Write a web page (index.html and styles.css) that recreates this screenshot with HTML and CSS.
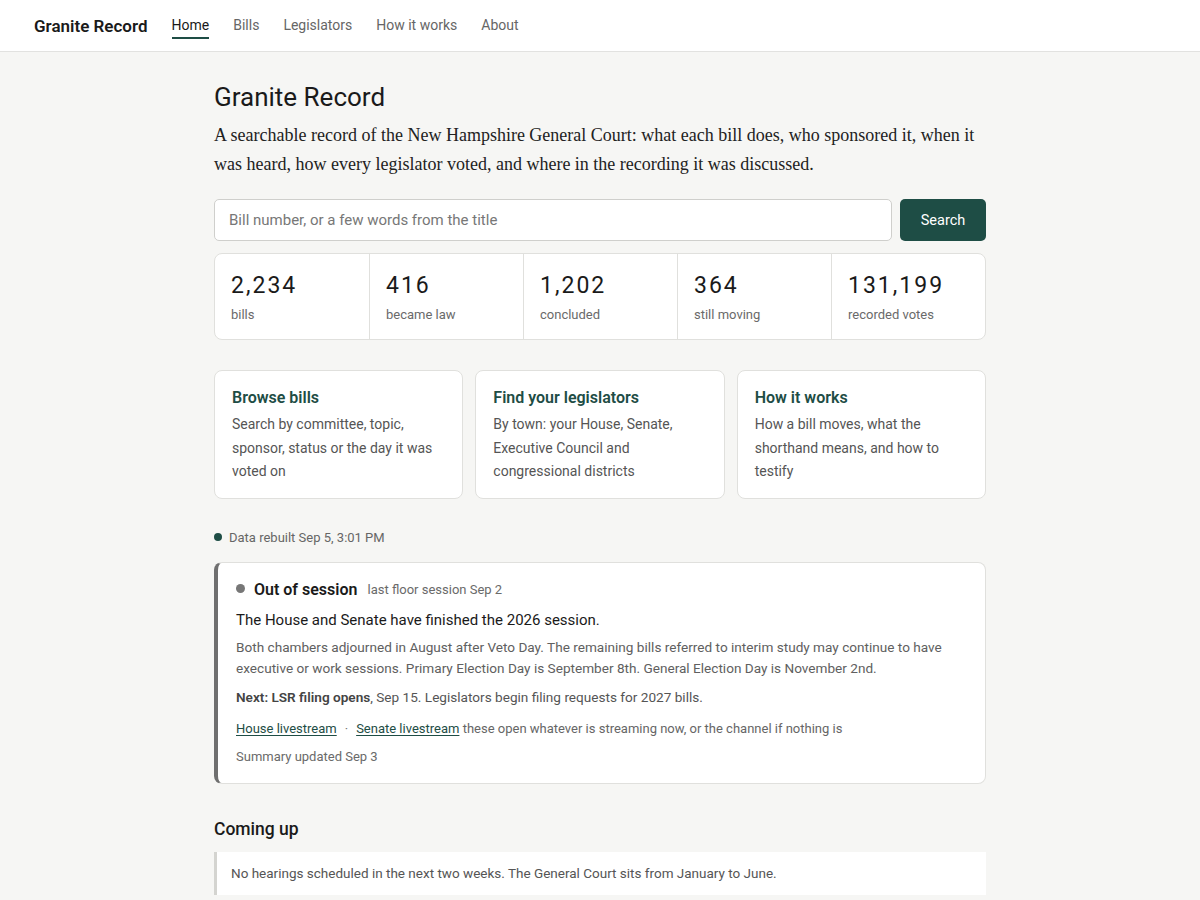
FILE: index.html
```html
<!DOCTYPE html>
<html lang="en">
<head>
<meta charset="utf-8">
<title>Granite Record</title>
<link rel="stylesheet" href="styles.css">
</head>
<body>
<header class="topbar">
  <a class="brand" href="#">Granite Record</a>
  <nav class="nav">
    <a class="nav-link active" href="#">Home</a>
    <a class="nav-link" href="#">Bills</a>
    <a class="nav-link" href="#">Legislators</a>
    <a class="nav-link" href="#">How it works</a>
    <a class="nav-link" href="#">About</a>
  </nav>
</header>
<main class="main">
  <h1 class="title">Granite Record</h1>
  <p class="lede">A searchable record of the New Hampshire General Court: what each bill does, who sponsored it, when it was heard, how every legislator voted, and where in the recording it was discussed.</p>
  <form class="search">
    <input class="search-input" type="text" placeholder="Bill number, or a few words from the title">
    <button class="search-btn" type="button">Search</button>
  </form>
  <section class="stats">
    <div class="stat"><div class="stat-num">2,234</div><div class="stat-label">bills</div></div>
    <div class="stat"><div class="stat-num">416</div><div class="stat-label">became law</div></div>
    <div class="stat"><div class="stat-num">1,202</div><div class="stat-label">concluded</div></div>
    <div class="stat"><div class="stat-num">364</div><div class="stat-label">still moving</div></div>
    <div class="stat"><div class="stat-num">131,199</div><div class="stat-label">recorded votes</div></div>
  </section>
  <section class="cards">
    <a class="card" href="#"><h3 class="card-title">Browse bills</h3><p class="card-text">Search by committee, topic, sponsor, status or the day it was voted on</p></a>
    <a class="card" href="#"><h3 class="card-title">Find your legislators</h3><p class="card-text">By town: your House, Senate, Executive Council and congressional districts</p></a>
    <a class="card" href="#"><h3 class="card-title">How it works</h3><p class="card-text">How a bill moves, what the shorthand means, and how to testify</p></a>
  </section>
  <p class="rebuilt"><span class="dot dot-green"></span>Data rebuilt Sep 5, 3:01 PM</p>
  <section class="session">
    <div class="session-head"><span class="dot dot-grey"></span><strong class="session-state">Out of session</strong><span class="session-meta">last floor session Sep 2</span></div>
    <p class="session-lead">The House and Senate have finished the 2026 session.</p>
    <p class="session-body">Both chambers adjourned in August after Veto Day. The remaining bills referred to interim study may continue to have executive or work sessions. Primary Election Day is September 8th. General Election Day is November 2nd.</p>
    <p class="session-next"><strong>Next: LSR filing opens</strong>, Sep 15. Legislators begin filing requests for 2027 bills.</p>
    <p class="session-links"><a href="#">House livestream</a><span class="sep">·</span><a href="#">Senate livestream</a> these open whatever is streaming now, or the channel if nothing is</p>
    <p class="session-updated">Summary updated Sep 3</p>
  </section>
  <h2 class="section-title">Coming up</h2>
  <div class="notice">No hearings scheduled in the next two weeks. The General Court sits from January to June.</div>
</main>
</body>
</html>
```
FILE: styles.css
```css
* { box-sizing: border-box; }
html, body { margin: 0; padding: 0; }
body {
  background: #f6f6f4;
  color: #1c1c1c;
  font-family: Roboto, "Liberation Sans", Arial, sans-serif;
}
a { color: inherit; text-decoration: none; }

.topbar {
  height: 52px;
  background: #ffffff;
  border-bottom: 1px solid #e2e2e0;
  display: flex;
  align-items: center;
  padding: 0 34px;
  gap: 24px;
}
.brand {
  font-size: 17px;
  font-weight: 600;
  color: #1a1a1a;
}
.nav { display: flex; gap: 24px; align-items: center; }
.nav-link {
  font-size: 14px;
  color: #666;
  padding: 5px 0 4px;
  border-bottom: 2px solid transparent;
}
.nav-link.active {
  color: #1a1a1a;
  border-bottom-color: #1e4d45;
}

.main {
  max-width: 772px;
  margin: 0 auto;
  padding: 27px 0 0;
}
.title {
  font-size: 26px;
  font-weight: 400;
  margin: 0 0 6px;
  line-height: 36px;
  color: #1a1a1a;
}
.lede {
  font-family: "Liberation Serif", "Times New Roman", serif;
  font-size: 18px;
  line-height: 29px;
  color: #222;
  margin: 0 0 20px;
}

.search { display: flex; gap: 8px; margin: 0 0 12px; }
.search-input {
  flex: 1;
  height: 42px;
  border: 1px solid #cfcfcc;
  border-radius: 5px;
  padding: 0 14px;
  font: inherit;
  font-size: 15px;
  background: #fff;
}
.search-input::placeholder { color: #777; }
.search-btn {
  width: 86px;
  height: 42px;
  border: 0;
  border-radius: 5px;
  background: #1e4d45;
  color: #fff;
  font: inherit;
  font-size: 14.5px;
}

.stats {
  display: grid;
  grid-template-columns: repeat(5, 1fr);
  background: #fff;
  border: 1px solid #e0e0dd;
  border-radius: 8px;
  margin-bottom: 30px;
}
.stat {
  padding: 17px 16px 15px;
  border-left: 1px solid #e0e0dd;
}
.stat:first-child { border-left: 0; }
.stat-num {
  font-size: 23px;
  line-height: 30px;
  letter-spacing: 2px;
  color: #1a1a1a;
  margin-bottom: 5px;
}
.stat-label { font-size: 13px; color: #6a6a6a; line-height: 18px; }

.cards {
  display: grid;
  grid-template-columns: repeat(3, 1fr);
  gap: 12px;
  margin-bottom: 30px;
}
.card {
  background: #fff;
  border: 1px solid #e0e0dd;
  border-radius: 8px;
  padding: 16px 17px 14px;
  display: block;
}
.card-title {
  margin: 0 0 4px;
  font-size: 16px;
  font-weight: 600;
  color: #1e4d45;
  line-height: 22px;
}
.card-text {
  margin: 0;
  font-size: 14px;
  line-height: 23.5px;
  color: #555;
}

.dot {
  display: inline-block;
  width: 8px;
  height: 8px;
  border-radius: 50%;
  margin-right: 7px;
  vertical-align: middle;
  position: relative;
  top: -1px;
}
.dot-green { background: #1e4d45; }
.dot-grey { background: #777; width: 9px; height: 9px; margin-right: 9px; }

.rebuilt {
  font-size: 13px;
  color: #666;
  margin: 0 0 15px;
  line-height: 18px;
}

.session {
  background: #fff;
  border: 1px solid #e0e0dd;
  border-left: 4px solid #6f6f6f;
  border-radius: 8px;
  padding: 16px 18px 16px;
  margin-bottom: 33px;
}
.session p { margin: 0; }
.session-head { display: flex; align-items: center; line-height: 22px; margin-bottom: 8px; }
.session-state { font-size: 16px; font-weight: 600; color: #1a1a1a; margin-right: 10px; }
.session-meta { font-size: 13px; color: #6a6a6a; }
.session-lead { font-size: 15px; color: #1a1a1a; line-height: 22px; margin-bottom: 6px !important; }
.session-body { font-size: 13.6px; color: #606060; line-height: 21px; margin-bottom: 8px !important; }
.session-next { font-size: 13.6px; color: #555; line-height: 21px; margin-bottom: 10px !important; }
.session-next strong { font-weight: 600; color: #444; }
.session-links { font-size: 13px; color: #666; line-height: 21px; margin-bottom: 7px !important; }
.session-links a { color: #1e4d45; text-decoration: underline; text-underline-offset: 2px; }
.sep { margin: 0 8px; color: #777; }
.session-updated { font-size: 13px; color: #6a6a6a; line-height: 21px; }

.section-title {
  font-size: 17.5px;
  font-weight: 500;
  margin: 0 0 11px;
  line-height: 24px;
  color: #1a1a1a;
}
.notice {
  background: #fff;
  border-left: 3px solid #d4d4d0;
  padding: 12px 14px;
  font-size: 13.5px;
  color: #555;
  line-height: 19px;
}
```
